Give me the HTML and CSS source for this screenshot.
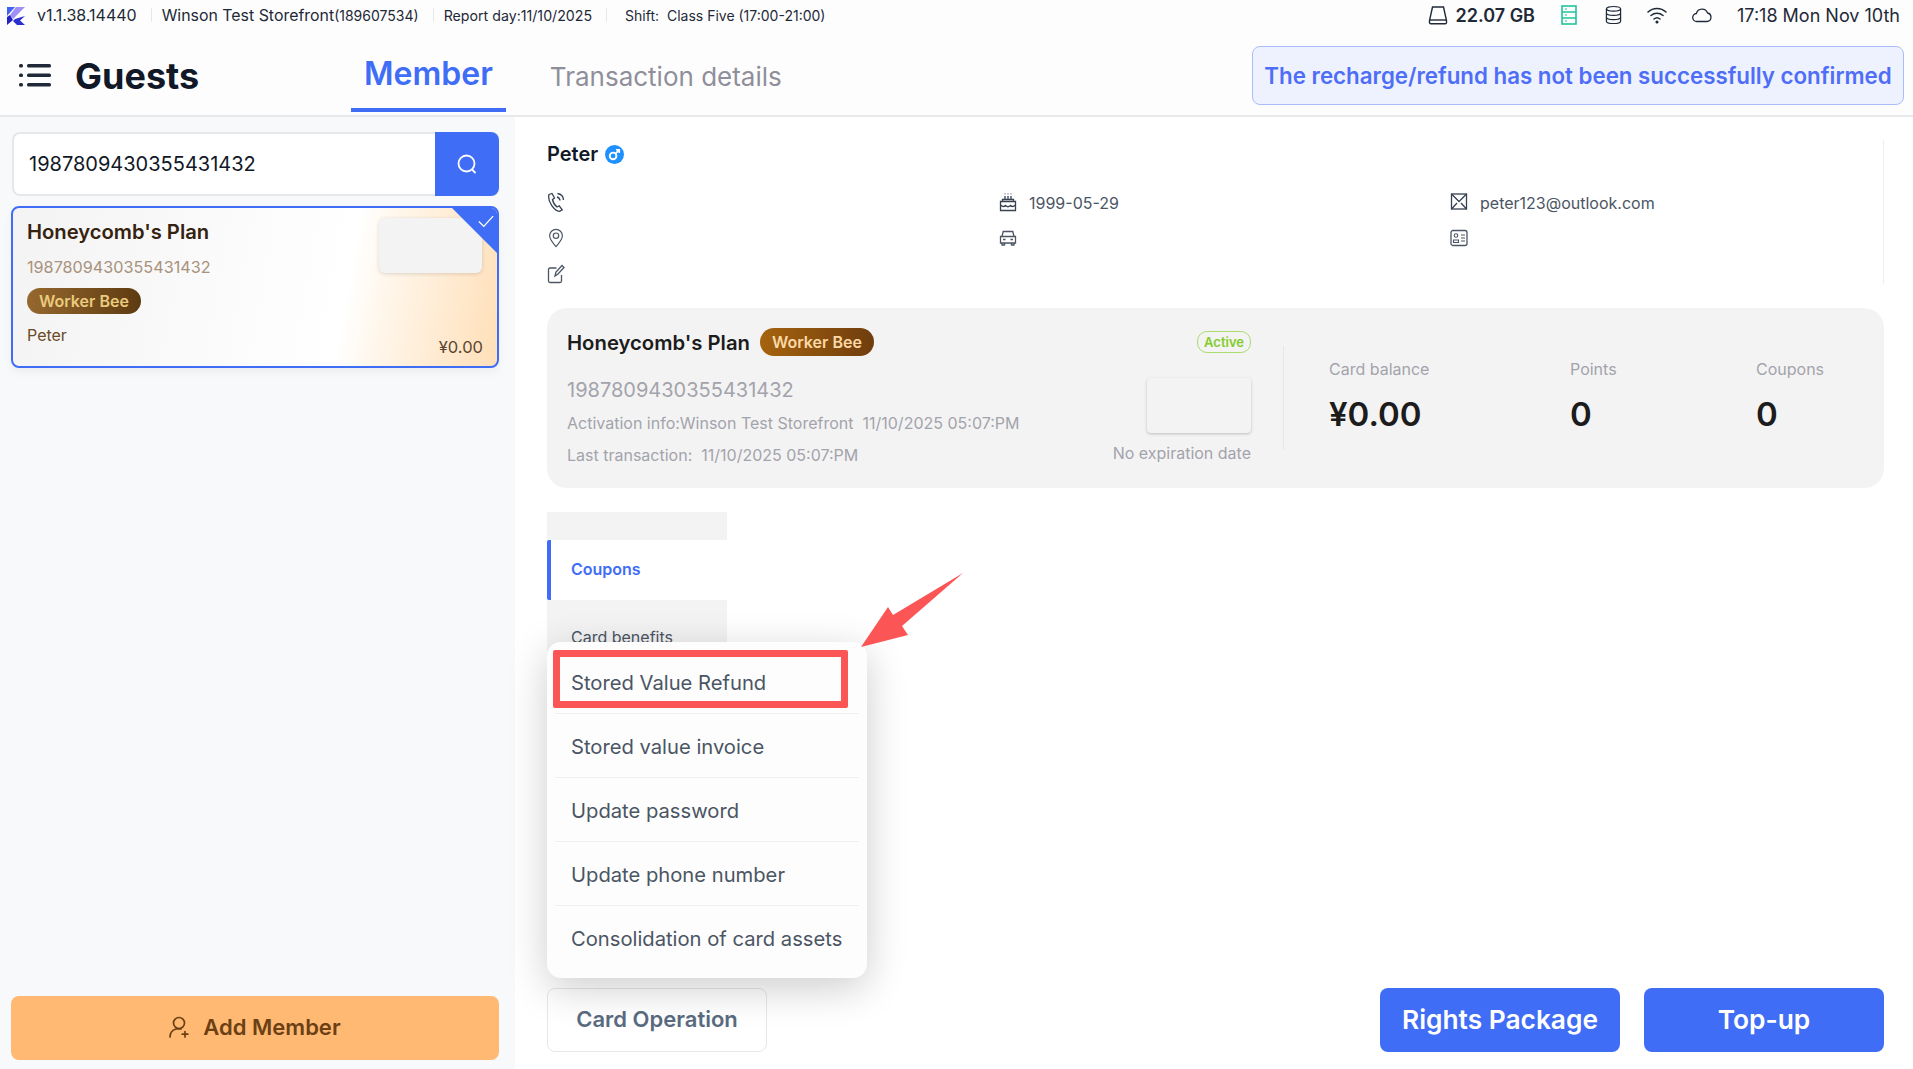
FILE: index.html
```html
<!DOCTYPE html>
<html lang="en">
<head>
    <meta charset="UTF-8">
    <title>Guests</title>
    <link rel="stylesheet" href="styles.css">
</head>
<body>
    <div class="app">
        <div class="topbar">
            <div class="topbar-left">
                <svg class="logo" viewBox="0 0 18 18"><polygon points="0,0 8,0 0,9" fill="#3f62f2"/><polygon points="9,0 18,0 6,12 3,8" fill="#a08ff5"/><polygon points="0,10 3,8 6,13 0,18" fill="#2222c8"/><polygon points="8,12 18,9 13,13.500 18,18 10,18 6,14" fill="#2a2fd0"/></svg>
                <span class="version">v1.1.38.14440</span>
                <span class="sep"></span>
                <span class="store">Winson Test Storefront<small>(189607534)</small></span>
                <span class="sep"></span>
                <span class="report">Report day:11/10/2025</span>
                <span class="sep"></span>
                <span class="shift">Shift:&nbsp; Class Five (17:00-21:00)</span>
            </div>
            <div class="topbar-right">
                <svg class="icon-disk" viewBox="0 0 20 20" fill="none" stroke="#1f2937" stroke-width="1.4"><path d="M4.5 2h11l3 13.5v2a1.2 1.2 0 0 1-1.2 1.2H2.700a1.200 1.200 0 0 1-1.200-1.200v-2z"/><path d="M1.500 15h17"/></svg>
                <span class="disk-size">22.07 GB</span>
                <svg class="icon-server" viewBox="0 0 16 20" fill="none" stroke="#22c39a" stroke-width="1.600"><rect x="1" y="1" width="14" height="18"/><path d="M1 7h14M1 13h14"/><path d="M4 4h2M4 10h2M4 16h2" stroke-width="1.200"/></svg>
                <svg class="icon-db" viewBox="0 0 18 20" fill="none" stroke="#1f2937" stroke-width="1.300"><ellipse cx="9" cy="3.500" rx="7.500" ry="2.500"/><path d="M1.500 3.500v13c0 1.400 3.400 2.500 7.500 2.500s7.500-1.100 7.500-2.500v-13"/><path d="M1.500 8c0 1.400 3.400 2.500 7.500 2.500s7.500-1.100 7.500-2.500M1.500 12.500c0 1.400 3.400 2.500 7.500 2.500s7.500-1.100 7.500-2.500"/></svg>
                <svg class="icon-wifi" viewBox="0 0 20 18" fill="none" stroke="#1f2937" stroke-width="1.500" stroke-linecap="round"><path d="M1 6a13 13 0 0 1 18 0M4 9.500a9 9 0 0 1 12 0M7 13a4.500 4.500 0 0 1 6 0"/><circle cx="10" cy="16" r=".8" fill="#1f2937"/></svg>
                <svg class="icon-cloud" viewBox="0 0 20 16" fill="none" stroke="#1f2937" stroke-width="1.300"><path d="M5 14.500a4 4 0 0 1-.6-8A5.800 5.800 0 0 1 15.500 6a4.300 4.300 0 0 1-.5 8.500z"/></svg>
                <span class="clock">17:18 Mon Nov 10th</span>
            </div>
        </div>

        <div class="header">
            <svg class="icon-menu" viewBox="0 0 32 23" fill="#1f2937"><rect x="0" y="0" width="4" height="3.600" rx="1.500"/><rect x="0" y="9.500" width="4" height="3.600" rx="1.500"/><rect x="0" y="19" width="4" height="3.600" rx="1.500"/><rect x="8" y="0" width="24" height="3.600" rx="1.500"/><rect x="8" y="9.500" width="24" height="3.600" rx="1.500"/><rect x="8" y="19" width="24" height="3.600" rx="1.500"/></svg>
            <h1 class="page-title">Guests</h1>
            <div class="tabs">
                <div class="tab active">Member</div>
                <div class="tab">Transaction details</div>
            </div>
            <div class="notice">The recharge/refund has not been successfully confirmed</div>
        </div>

        <div class="main">
            <div class="sidebar">
                <div class="search">
                    <div class="search-input">1987809430355431432</div>
                    <div class="search-btn">
                        <svg viewBox="0 0 22 22" fill="none" stroke="#fff" stroke-width="1.800" stroke-linecap="round"><circle cx="10.500" cy="10.500" r="8"/><path d="M16.500 17l2.500 2.500"/></svg>
                    </div>
                </div>
                <div class="member-card">
                    <div class="corner"></div>
                    <svg class="corner-check" viewBox="0 0 18 14" fill="none" stroke="#fff" stroke-width="1.500"><path d="M1 7l5.500 5.500L17 1"/></svg>
                    <div class="member-left">
                        <div class="member-plan">Honeycomb's Plan</div>
                        <div class="member-no">1987809430355431432</div>
                        <div class="member-badge">Worker Bee</div>
                        <div class="member-name">Peter</div>
                    </div>
                    <div class="member-right">
                        <div class="member-thumb"></div>
                        <div class="member-amount">¥0.00</div>
                    </div>
                </div>
                <div class="add-member">
                    <svg viewBox="0 0 20 22" fill="none" stroke="#6b4014" stroke-width="1.700" stroke-linecap="round"><circle cx="10" cy="7" r="5.500"/><path d="M1 21c0-4 2.500-7 6-8h5"/><path d="M16 15.500v5.500M13.200 18.200h5.600"/></svg>
                    <span>Add Member</span>
                </div>
            </div>

            <div class="content">
                <div class="profile">
                    <div class="profile-name">
                        <span>Peter</span>
                        <svg class="icon-gender" viewBox="0 0 20 20"><circle cx="10" cy="10" r="10" fill="#1e90ff"/><circle cx="8.500" cy="11.500" r="3.500" fill="none" stroke="#fff" stroke-width="2"/><path d="M11 9l3.500-3.500M11.500 5h3.500v3.500" fill="none" stroke="#fff" stroke-width="1.800"/></svg>
                    </div>
                    <div class="info-grid">
                        <div class="info-item">
                            <svg viewBox="0 0 18 20" fill="none" stroke="#374151" stroke-width="1.300"><path d="M2 2.500l3-1 2.500 4.500-2 1.500c.5 2.500 2.500 6 4.500 7.500l2.200-1.200 3 4-2.500 1.500C7.500 19.500 0 9 2 2.500z"/><path d="M10 5a4 4 0 0 1 3 3.500M10.500 1.500a7 7 0 0 1 6 6.500"/></svg>
                        </div>
                        <div class="info-item">
                            <svg viewBox="0 0 18 20" fill="none" stroke="#374151" stroke-width="1.300"><path d="M1.500 18.500h15v-9h-15z"/><path d="M1.500 13c2 2 3.500 2 5 .5 1.500 1.500 3.500 1.500 5 0 1.500 1.500 3 1.500 5-.5M3.500 9.500V7.500h11v2M6 7V4M9 7V4M12 7V4M6 1.500v.8M9 1.500v.8M12 1.500v.8"/></svg>
                            <span>1999-05-29</span>
                        </div>
                        <div class="info-item">
                            <svg viewBox="0 0 18 20" fill="none" stroke="#374151" stroke-width="1.300"><rect x="1.500" y="2" width="15" height="15" fill="none"/><path d="M1.500 2l7.500 7.500L16.500 2M1.500 17l5.500-6M16.500 17l-5.500-6"/></svg>
                            <span>peter123@outlook.com</span>
                        </div>
                        <div class="info-item">
                            <svg viewBox="0 0 18 22" fill="none" stroke="#4b5563" stroke-width="1.300"><path d="M9 20.500C5 15.500 2 12.500 2 8.500a7 7 0 0 1 14 0c0 4-3 7-7 12z"/><circle cx="9" cy="8.500" r="3"/></svg>
                        </div>
                        <div class="info-item">
                            <svg viewBox="0 0 18 16" fill="none" stroke="#4b5563" stroke-width="1.300"><path d="M3 6.500l1.200-5h9.600l1.200 5M1.500 6.500h15v6.500h-15zM3 13v2h2.500v-2M12.500 13v2H15v-2M4 9.500h2.500M11.500 9.500H14"/></svg>
                        </div>
                        <div class="info-item">
                            <svg viewBox="0 0 18 20" fill="none" stroke="#4b5563" stroke-width="1.100"><rect x="1" y="2.500" width="16" height="15" rx="2" stroke-width="1.300"/><circle cx="6" cy="7.500" r="1.800"/><path d="M3.500 14.500v-2.500h5v2.500zM11 7h4M11 10h4M11 13h4"/></svg>
                        </div>
                        <div class="info-item">
                            <svg viewBox="0 0 18 20" fill="none" stroke="#4b5563" stroke-width="1.300"><path d="M9.500 4H3a1.500 1.500 0 0 0-1.500 1.500v11.500A1.500 1.500 0 0 0 3 18.500h10a1.500 1.500 0 0 0 1.500-1.500v-6"/><path d="M8 12l1-4 6-6.500 2 2-6 6.500z"/></svg>
                        </div>
                    </div>
                </div>

                <div class="plan-card">
                    <div class="plan-main">
                        <div class="plan-left">
                            <div class="plan-title">
                                <span>Honeycomb's Plan</span>
                                <span class="plan-badge">Worker Bee</span>
                            </div>
                            <div class="plan-no">1987809430355431432</div>
                            <div class="plan-meta">Activation info:Winson Test Storefront&nbsp; 11/10/2025 05:07:PM</div>
                            <div class="plan-meta">Last transaction:&nbsp; 11/10/2025 05:07:PM</div>
                        </div>
                        <div class="plan-right">
                            <span class="status">Active</span>
                            <div class="plan-thumb"></div>
                            <div class="plan-expiry">No expiration date</div>
                        </div>
                    </div>
                    <div class="stats">
                        <div class="stat">
                            <div class="stat-label">Card balance</div>
                            <div class="stat-value">¥0.00</div>
                        </div>
                        <div class="stat">
                            <div class="stat-label">Points</div>
                            <div class="stat-value">0</div>
                        </div>
                        <div class="stat">
                            <div class="stat-label">Coupons</div>
                            <div class="stat-value">0</div>
                        </div>
                    </div>
                </div>

                <div class="side-tabs">
                    <div class="side-tab-top"></div>
                    <div class="side-tab active">Coupons</div>
                    <div class="side-tab next">Card benefits</div>
                </div>

                <div class="footer">
                    <div class="op-menu">
                        <div class="op-item">Stored Value Refund</div>
                        <div class="op-item">Stored value invoice</div>
                        <div class="op-item">Update password</div>
                        <div class="op-item">Update phone number</div>
                        <div class="op-item last">Consolidation of card assets</div>
                        <div class="red-box"></div>
                        <svg class="red-arrow" viewBox="0 0 102 74"><polygon points="102,0 41,53 47,62 0,74 27,34 32,42" fill="#fb5555"/></svg>
                    </div>
                    <div class="btn-outline">Card Operation</div>
                    <div class="footer-right">
                        <div class="btn-primary">Rights Package</div>
                        <div class="btn-primary">Top-up</div>
                    </div>
                </div>
            </div>
        </div>
    </div>
</body>
</html>
```

FILE: styles.css
```css
* {
    box-sizing: border-box;
}
body {
    margin: 0;
    font-family: Inter, "Noto Sans", sans-serif;
    background-color: #fff;
    color: #111827;
    overflow: hidden;
}
.app {
    display: flex;
    flex-direction: column;
    width: 1913px;
    height: 1069px;
}

/* top status bar */
.topbar {
    display: flex;
    justify-content: space-between;
    align-items: center;
    height: 32px;
    padding: 0 13px 2px 7px;
    background-color: #fdfdfe;
    color: #1f2937;
}
.topbar-left,
.topbar-right {
    display: flex;
    align-items: center;
}
.logo {
    width: 18px;
    height: 18px;
    margin: 2px 12px 0 0;
}
.version {
    font-size: 16px;
}
.sep {
    width: 1px;
    height: 14px;
    margin: 0 10px 0 14px;
    background-color: #e5e7eb;
}
.store {
    font-size: 15.900px;
}
.store small {
    font-size: 14px;
}
.report {
    font-size: 14.200px;
}
.sep + .shift {
    margin-left: 8px;
}
.shift {
    font-size: 14px;
}
.icon-disk {
    width: 20px;
    height: 20px;
    margin-right: 8px;
}
.disk-size {
    font-size: 18px;
    font-weight: 600;
    margin-right: 26px;
}
.icon-server {
    width: 16px;
    height: 20px;
    margin-right: 28px;
}
.icon-db {
    width: 17px;
    height: 20px;
    margin-right: 25px;
}
.icon-wifi {
    width: 20px;
    height: 18px;
    margin-right: 25px;
}
.icon-cloud {
    width: 20px;
    height: 16px;
    margin-right: 25px;
}
.clock {
    font-size: 18px;
}

/* page header */
.header {
    display: flex;
    align-items: center;
    height: 85px;
    padding: 0 9px 0 19px;
    background-color: #fdfdfe;
    border-bottom: 2px solid #e8e9eb;
}
.icon-menu {
    width: 32px;
    height: 23px;
    margin: 4px 24px 0 0;
}
.page-title {
    margin: 5px 0 0;
    width: 276px;
    font-size: 36px;
    font-weight: 700;
    color: #111827;
}
.tabs {
    display: flex;
    align-self: stretch;
    flex: 1;
}
.tab {
    display: flex;
    align-items: center;
    margin-right: 44px;
    padding-top: 5px;
    font-size: 26px;
    color: #8f8f9a;
}
.tab.active {
    height: 80px;
    padding: 6px 13px 0;
    font-size: 32px;
    font-weight: 600;
    color: #3f6df6;
    border-bottom: 4px solid #3f6df6;
}
.notice {
    height: 59px;
    width: 652px;
    margin-top: 3px;
    line-height: 57px;
    text-align: center;
    white-space: nowrap;
    font-size: 22.300px;
    font-weight: 600;
    color: #4f6ef7;
    background-color: #eef2fe;
    border: 1px solid #a9bdfa;
    border-radius: 8px;
}

.main {
    display: flex;
    flex: 1;
    min-height: 0;
}

/* left column */
.sidebar {
    display: flex;
    flex-direction: column;
    width: 515px;
    padding: 15px 16px 9px 11px;
    background-color: #f8f9fb;
}
.search {
    display: flex;
    height: 64px;
    margin-bottom: 10px;
    margin-left: 1px;
}
.search-input {
    flex: 1;
    padding-left: 15px;
    line-height: 60px;
    font-size: 20px;
    background-color: #fff;
    border: 2px solid #e5e7eb;
    border-right: none;
    border-radius: 8px 0 0 8px;
}
.search-btn {
    display: flex;
    align-items: center;
    justify-content: center;
    width: 64px;
    background-color: #3f6df6;
    border-radius: 0 8px 8px 0;
}
.search-btn svg {
    width: 22px;
    height: 22px;
}
.member-card {
    position: relative;
    display: flex;
    justify-content: space-between;
    height: 162px;
    padding: 12px 14px 9px 14px;
    overflow: hidden;
    background: linear-gradient(100deg, #f3f3f3 0%, #fff 68%, #fff6ea 76%, #ffdfb8 100%);
    border: 2px solid #3f6df6;
    border-radius: 8px;
    box-shadow: 0 4px 10px rgba(0, 0, 0, 0.05);
}
.corner {
    position: absolute;
    top: 0;
    right: 0;
    border-style: solid;
    border-width: 0 45px 45px 0;
    border-color: transparent #3f6df6 transparent transparent;
}
.corner-check {
    position: absolute;
    top: 7px;
    right: 3px;
    width: 16px;
    height: 13px;
}
.member-left {
    display: flex;
    flex-direction: column;
    align-items: flex-start;
}
.member-plan {
    font-size: 20.200px;
    font-weight: 600;
    line-height: 24px;
    color: #35220f;
}
.member-no {
    margin-top: 13px;
    font-size: 16.200px;
    line-height: 20px;
    color: #a8927d;
}
.member-badge {
    margin-top: 11px;
    padding: 0 12px;
    font-size: 16px;
    font-weight: 600;
    line-height: 26px;
    color: #eacb7e;
    background: linear-gradient(90deg, #96682e, #5d3b11);
    border-radius: 13px;
}
.member-name {
    margin-top: 11px;
    font-size: 16px;
    line-height: 20px;
    color: #6b4a25;
}
.member-right {
    display: flex;
    flex-direction: column;
    align-items: flex-end;
    justify-content: space-between;
}
.member-thumb {
    width: 103px;
    height: 55px;
    margin: -2px 1px 0 0;
    background-color: #f3f3f3;
    border-radius: 6px;
    box-shadow: 0 1px 4px rgba(0, 0, 0, 0.14);
}
.member-amount {
    font-size: 16.500px;
    line-height: 20px;
    color: #5a4630;
}
.add-member {
    display: flex;
    align-items: center;
    justify-content: center;
    gap: 14px;
    height: 64px;
    margin-top: auto;
    padding-bottom: 2px;
    font-size: 22px;
    font-weight: 600;
    color: #6b4014;
    background-color: #ffb973;
    border-radius: 8px;
}
.add-member svg {
    width: 20px;
    height: 22px;
}

/* right column */
.content {
    display: flex;
    flex-direction: column;
    flex: 1;
    padding: 23px 29px 17px 32px;
}
.profile {
    height: 144px;
    border-right: 1px solid #eceef0;
}
.profile-name {
    display: flex;
    align-items: center;
    gap: 7px;
    height: 28px;
    margin-bottom: 16px;
    font-size: 20px;
    font-weight: 600;
}
.icon-gender {
    width: 19px;
    height: 19px;
}
.info-grid {
    display: grid;
    grid-template-columns: 452px 451px 1fr;
    grid-auto-rows: 36px;
}
.info-item {
    display: flex;
    align-items: center;
    gap: 12px;
    font-size: 16px;
    color: #4b5563;
}
.info-item span {
    padding-top: 2px;
}
.info-item svg {
    width: 18px;
    height: 20px;
}

.plan-card {
    display: flex;
    height: 180px;
    margin-top: 24px;
    background-color: #f3f3f3;
    border-radius: 20px;
}
.plan-main {
    display: flex;
    justify-content: space-between;
    width: 736px;
    padding: 20px 32px 0 20px;
}
.plan-title {
    display: flex;
    align-items: center;
    gap: 10px;
    height: 28px;
    font-size: 20.300px;
    font-weight: 600;
    color: #1c1c1c;
}
.plan-badge {
    padding: 0 12px;
    font-size: 16px;
    font-weight: 600;
    line-height: 28px;
    color: #fbd8a5;
    background: linear-gradient(90deg, #a5630e, #6f3d0e);
    border-radius: 14px;
}
.plan-no {
    margin-top: 20px;
    font-size: 20px;
    line-height: 28px;
    color: #a3a3ab;
}
.plan-meta {
    margin-top: 8px;
    font-size: 16px;
    line-height: 24px;
    color: #a3a3ab;
}
.plan-no + .plan-meta {
    margin-top: 7px;
}
.plan-right {
    display: flex;
    flex-direction: column;
    align-items: flex-end;
}
.status {
    margin-top: 3px;
    padding: 0 6px;
    font-size: 13px;
    font-weight: 600;
    line-height: 20px;
    color: #84cc2a;
    border: 1px solid #a9dc6e;
    border-radius: 10px;
}
.plan-thumb {
    width: 104px;
    height: 55px;
    margin-top: 25px;
    background-color: #f3f3f3;
    border-radius: 4px;
    box-shadow: 0 1px 3px rgba(0, 0, 0, 0.22);
}
.plan-expiry {
    margin-top: 10px;
    font-size: 16px;
    line-height: 20px;
    color: #a3a3ab;
}
.stats {
    display: grid;
    grid-template-columns: 241px 186px 1fr;
    align-self: center;
    flex: 1;
    height: 104px;
    padding: 12px 0 0 45px;
    border-left: 1px solid #e6e6e6;
}
.stat-label {
    font-size: 16px;
    line-height: 22px;
    color: #a3a3ab;
}
.stat-value {
    margin-top: 14px;
    font-size: 33px;
    font-weight: 600;
    line-height: 40px;
    color: #1c1c1c;
}

.side-tabs {
    width: 180px;
    margin-top: 24px;
    background-color: #f3f3f3;
}
.side-tab-top {
    height: 28px;
}
.side-tab {
    height: 60px;
    padding-left: 24px;
    font-size: 16px;
    line-height: 60px;
    color: #4b5563;
}
.side-tab.active {
    font-weight: 600;
    line-height: 58px;
    color: #3f6df6;
    background-color: #fff;
    border-left: 4px solid #3f6df6;
    border-radius: 2px 0 0 2px;
    padding-left: 20px;
}
.side-tab.next {
    height: 74px;
    line-height: 74px;
}

.footer {
    position: relative;
    display: flex;
    justify-content: space-between;
    margin-top: auto;
}
.btn-outline {
    width: 220px;
    height: 64px;
    line-height: 60px;
    text-align: center;
    font-size: 22px;
    font-weight: 600;
    color: #5a6b7f;
    border: 1px solid #e5e7eb;
    border-radius: 8px;
}
.footer-right {
    display: flex;
    gap: 24px;
}
.btn-primary {
    width: 240px;
    height: 64px;
    line-height: 64px;
    text-align: center;
    font-size: 26.300px;
    font-weight: 600;
    color: #fff;
    background-color: #3f6df6;
    border-radius: 8px;
}

/* popup over the footer */
.op-menu {
    position: absolute;
    left: 0;
    bottom: calc(100% + 10px);
    width: 320px;
    padding: 8px 8px;
    background-color: #fdfdfd;
    border-radius: 14px;
    box-shadow: 0 10px 40px rgba(0, 0, 0, 0.2);
}
.op-item {
    height: 64px;
    padding-left: 16px;
    line-height: 66px;
    font-size: 20.200px;
    color: #4b5563;
    border-bottom: 1px solid #f0f0f2;
}
.op-item.last {
    border-bottom: none;
}
.red-box {
    position: absolute;
    top: 8px;
    left: 6px;
    width: 295px;
    height: 58px;
    border: 7px solid #fb5555;
    border-radius: 2px;
}
.red-arrow {
    position: absolute;
    top: -69px;
    left: 314px;
    width: 102px;
    height: 74px;
}
```
